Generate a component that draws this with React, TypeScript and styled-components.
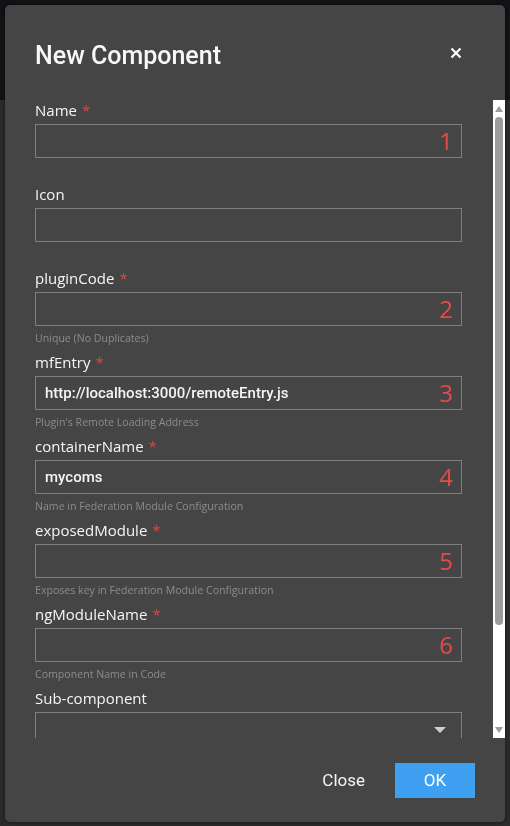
import styled, { createGlobalStyle } from 'styled-components'

const GlobalStyle = createGlobalStyle`
  html, body {
    margin: 0;
    padding: 0;
    height: 100%;
    background: #2a2a2a;
    font-family: Roboto, "Liberation Sans", sans-serif;
    overflow: hidden;
  }
`

const Page = styled.div`
  width: 510px;
  height: 826px;
  display: flex;
  flex-direction: column;
`

const TopBar = styled.div`
  height: 100px;
  background: #121217;
`

const PageRest = styled.div`
  flex: 1;
  background: #2b2b2b;
`

const Dialog = styled.div`
  position: fixed;
  top: 5px;
  left: 5px;
  width: 500px;
  height: 817px;
  border-radius: 5px;
  background: #454545;
  display: flex;
  flex-direction: column;
  box-shadow: 0 0 4px rgba(0, 0, 0, 0.5);
`

const Header = styled.div`
  height: 95px;
  box-sizing: border-box;
  padding: 5px 43px 0 30px;
  display: flex;
  align-items: center;
  justify-content: space-between;
`

const Title = styled.h2`
  margin: 0;
  font-size: 25px;
  font-weight: 500;
  color: #f7f7f7;
`

const CloseX = styled.button`
  border: 0;
  background: none;
  padding: 0;
  margin-bottom: 4px;
  width: 12px;
  height: 12px;
  display: flex;
  cursor: pointer;
`

const BodyRow = styled.div`
  height: 638px;
  display: flex;
`

const Body = styled.div`
  flex: 1;
  overflow: hidden;
  padding: 0 31px 0 30px;
`

const ScrollBar = styled.div`
  width: 12px;
  background: #ffffff;
  display: flex;
  flex-direction: column;
  align-items: center;
`

const ScrollArrow = styled.div`
  height: 17px;
  display: flex;
  align-items: center;
  justify-content: center;
`

const Thumb = styled.div`
  width: 8px;
  height: 508px;
  border-radius: 4px;
  background: #9c9c9c;
`

const ThumbSpacer = styled.div`
  flex: 1;
`

const Form = styled.div`
  padding-bottom: 90px;
`

const Field = styled.div`
  display: flex;
  flex-direction: column;
`

const Label = styled.label`
  height: 20px;
  line-height: 20px;
  font-family: "Open Sans", "Noto Sans", sans-serif;
  font-size: 15px;
  font-weight: 500;
  color: #f5f5f5;
  margin-bottom: 4px;
`

const Required = styled.span`
  color: #e0463f;
  margin-left: 5px;
`

const InputBox = styled.div`
  height: 34px;
  box-sizing: border-box;
  border: 1px solid #808080;
  padding: 0 8px 0 9px;
  display: flex;
  align-items: center;
  justify-content: space-between;
`

const Value = styled.span`
  font-family: Roboto, "Liberation Sans", sans-serif;
  font-size: 15px;
  font-weight: 500;
  color: #f4f4f4;
`

const Marker = styled.span`
  font-family: "Open Sans", "Noto Sans", sans-serif;
  font-size: 24px;
  font-weight: 400;
  line-height: 1;
  color: #e84a4a;
`

const Caret = styled.span`
  width: 0;
  height: 0;
  margin-right: 7px;
  margin-top: 2px;
  border-left: 6px solid transparent;
  border-right: 6px solid transparent;
  border-top: 6px solid #d0d0d0;
`

const Help = styled.div`
  height: 26px;
  box-sizing: border-box;
  padding-top: 5px;
  font-family: "Open Sans", "Noto Sans", sans-serif;
  font-size: 10.6px;
  font-weight: 500;
  line-height: 14px;
  color: #8c8c8c;
`

const Footer = styled.div`
  flex: 1;
  display: flex;
  align-items: center;
  justify-content: flex-end;
  gap: 15px;
  padding-right: 30px;
`

const TextButton = styled.button`
  border: 0;
  background: none;
  padding: 0 15px;
  height: 35px;
  font-family: Roboto, "Liberation Sans", sans-serif;
  font-size: 17px;
  color: #f4f4f4;
  cursor: pointer;
`

const PrimaryButton = styled.button`
  border: 0;
  width: 80px;
  height: 35px;
  background: #3f9ff0;
  font-family: Roboto, "Liberation Sans", sans-serif;
  font-size: 17px;
  color: #ffffff;
  cursor: pointer;
`

interface FieldDef {
  label: string
  required?: boolean
  value?: string
  marker?: string
  help?: string
  select?: boolean
}

const fields: FieldDef[] = [
  { label: 'Name', required: true, marker: '1' },
  { label: 'Icon' },
  { label: 'pluginCode', required: true, marker: '2', help: 'Unique (No Duplicates)' },
  {
    label: 'mfEntry',
    required: true,
    value: 'http://localhost:3000/remoteEntry.js',
    marker: '3',
    help: "Plugin's Remote Loading Address",
  },
  {
    label: 'containerName',
    required: true,
    value: 'mycoms',
    marker: '4',
    help: 'Name in Federation Module Configuration',
  },
  {
    label: 'exposedModule',
    required: true,
    marker: '5',
    help: 'Exposes key in Federation Module Configuration',
  },
  { label: 'ngModuleName', required: true, marker: '6', help: 'Component Name in Code' },
  { label: 'Sub-component', select: true },
]

const App = () => {
  return (
    <>
      <GlobalStyle />
      <Page>
        <TopBar />
        <PageRest />
      </Page>
      <Dialog>
        <Header>
          <Title>New Component</Title>
          <CloseX aria-label="close">
            <svg width="12" height="12" viewBox="0 0 12 12">
              <path d="M1.5 1.5 L10.5 10.5 M10.5 1.5 L1.5 10.5" stroke="#fff" strokeWidth="2.2" />
            </svg>
          </CloseX>
        </Header>
        <BodyRow>
          <Body>
            <Form>
              {fields.map((f) => (
                <Field key={f.label}>
                  <Label>
                    {f.label}
                    {f.required && <Required>*</Required>}
                  </Label>
                  <InputBox>
                    <Value>{f.value}</Value>
                    {f.marker && <Marker>{f.marker}</Marker>}
                    {f.select && <Caret />}
                  </InputBox>
                  <Help>{f.help}</Help>
                </Field>
              ))}
            </Form>
          </Body>
          <ScrollBar>
            <ScrollArrow>
              <svg width="8" height="6" viewBox="0 0 8 6">
                <polygon points="0,6 4,0 8,6" fill="#9c9c9c" />
              </svg>
            </ScrollArrow>
            <Thumb />
            <ThumbSpacer />
            <ScrollArrow>
              <svg width="8" height="6" viewBox="0 0 8 6">
                <polygon points="0,0 8,0 4,6" fill="#9c9c9c" />
              </svg>
            </ScrollArrow>
          </ScrollBar>
        </BodyRow>
        <Footer>
          <TextButton>Close</TextButton>
          <PrimaryButton>OK</PrimaryButton>
        </Footer>
      </Dialog>
    </>
  )
}

export default App
